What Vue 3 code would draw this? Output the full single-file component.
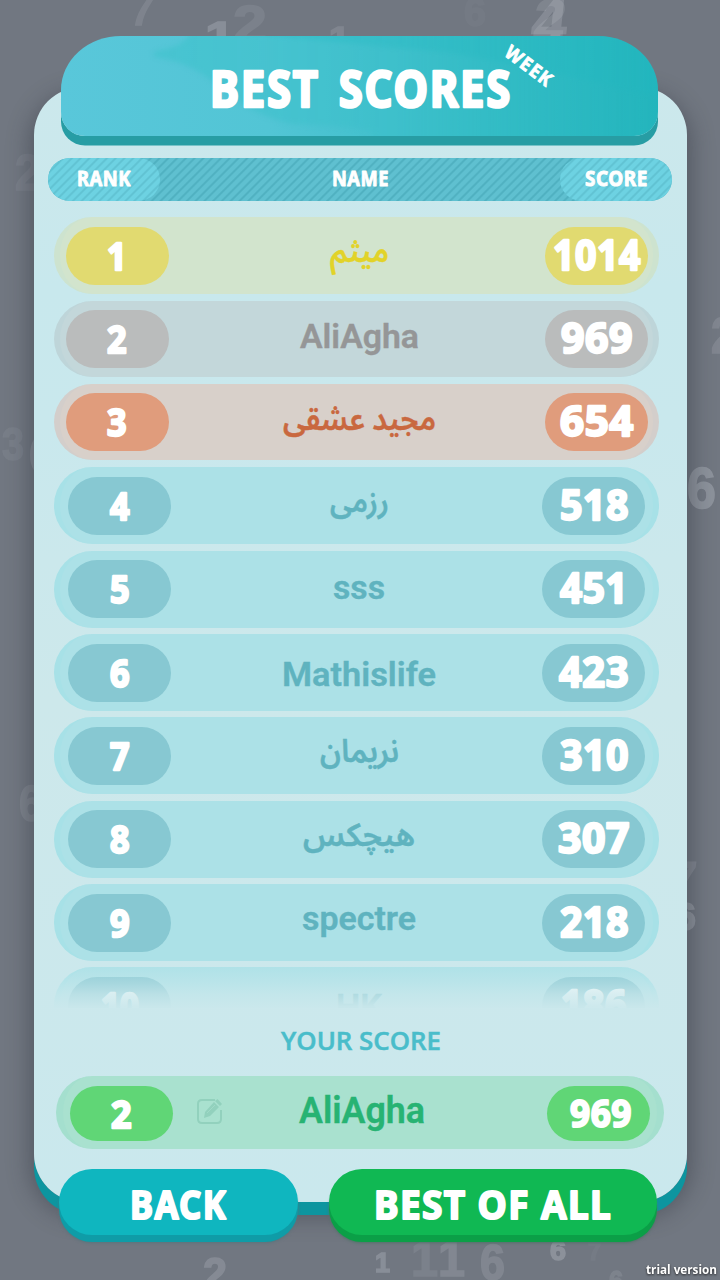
<script setup>
import { h } from 'vue'

const Label = (p) =>
  h('svg', { width: p.w, height: p.h, 'aria-label': p.t }, [
    h('text', {
      x: p.w / 2, y: p.b, 'text-anchor': 'middle', 'font-size': p.s,
      textLength: p.w, lengthAdjust: 'spacingAndGlyphs',
    }, p.t),
  ])
Label.props = ['t', 'w', 's', 'h', 'b']

const rows = [
  { rank: '1', name: 'میثم', nw: 59, b: 44.5, s: 32, score: '1014', sw: 88, kind: 'gold' },
  { rank: '2', name: 'AliAgha', nw: 119, b: 47, s: 34, score: '969', sw: 72, kind: 'silver' },
  { rank: '3', name: 'مجید عشقی', nw: 153, b: 45.5, s: 32, score: '654', sw: 74, kind: 'bronze' },
  { rank: '4', name: 'رزمی', nw: 59, b: 45, s: 32, score: '518', sw: 69, kind: 'plain' },
  { rank: '5', name: 'sss', nw: 52, b: 47.5, s: 34, score: '451', sw: 68, kind: 'plain' },
  { rank: '6', name: 'Mathislife', nw: 154, b: 51.5, s: 34, score: '423', sw: 70, kind: 'plain' },
  { rank: '7', name: 'نریمان', nw: 79, b: 45, s: 32, score: '310', sw: 69, kind: 'plain' },
  { rank: '8', name: 'هیچکس', nw: 112, b: 44.5, s: 32, score: '307', sw: 72, kind: 'plain' },
  { rank: '9', name: 'spectre', nw: 114, b: 45.5, s: 34, score: '218', sw: 69, kind: 'plain' },
  { rank: '10', name: 'HK', nw: 46, b: 51, s: 34, score: '186', sw: 66, kind: 'plain' },
]

const drift = [
  { t: '7', x: 130, y: 25, s: 48, w: 22, o: 0.13, k: -8 },
  { t: '1', x: 205, y: 51, s: 43, w: 30, o: 0.24, k: 0 },
  { t: '2', x: 233, y: 42, s: 52, w: 34, o: 0.1, k: 0 },
  { t: '1', x: 329, y: 50, s: 33, w: 21, o: 0.15, k: 0 },
  { t: '6', x: 464, y: 26, s: 40, w: 22, o: 0.03, k: 0 },
  { t: '2', x: 532, y: 37, s: 54, w: 32, o: 0.14, k: -6 },
  { t: '4', x: 530, y: 42, s: 60, w: 35, o: 0.2, k: -6 },
  { t: '2', x: 15, y: 190, s: 50, w: 25, o: 0.08, k: 0 },
  { t: '2', x: 711, y: 353, s: 50, w: 24, o: 0.15, k: 0 },
  { t: '3', x: 2, y: 460, s: 46, w: 22, o: 0.07, k: 0 },
  { t: '6', x: 29, y: 473, s: 54, w: 28, o: 0.17, k: 0 },
  { t: '6', x: 687, y: 508, s: 58, w: 29, o: 0.28, k: 0 },
  { t: '6', x: 19, y: 821, s: 50, w: 24, o: 0.12, k: 0 },
  { t: '7', x: 671, y: 894, s: 46, w: 22, o: 0.16, k: -8 },
  { t: '6', x: 674, y: 930, s: 38, w: 22, o: 0.28, k: 0 },
  { t: '2', x: 203, y: 1289, s: 44, w: 24, o: 0.2, k: 0 },
  { t: '1', x: 375, y: 1272, s: 28, w: 15, o: 0.24, k: 0 },
  { t: '1', x: 411, y: 1276, s: 50, w: 27, o: 0.1, k: 0 },
  { t: '1', x: 438, y: 1276, s: 50, w: 27, o: 0.17, k: 0 },
  { t: '6', x: 480, y: 1280, s: 50, w: 25, o: 0.16, k: 0 },
  { t: '6', x: 550, y: 1260, s: 27, w: 16, o: 0.27, k: 0 },
  { t: '7', x: 588, y: 1260, s: 26, w: 13, o: 0.04, k: 0 },
  { t: '6', x: 609, y: 1291, s: 30, w: 14, o: 0.12, k: 0 },
]
</script>

<template>
  <main class="screen">
    <svg class="drift" width="720" height="1280" aria-hidden="true">
      <text
        v-for="(d, i) in drift" :key="i" :font-size="d.s" :opacity="d.o"
        :textLength="d.w" lengthAdjust="spacingAndGlyphs"
        :transform="`translate(${d.x} ${d.y}) skewX(${d.k})`"
      >{{ d.t }}</text>
    </svg>

    <section class="panel">
      <header class="banner">
        <svg class="banner-art" width="597" height="100" aria-hidden="true">
          <defs>
            <linearGradient id="sweep" gradientUnits="userSpaceOnUse" x1="80" x2="597" y1="0" y2="0">
              <stop offset="0" stop-color="#3cc2cb" stop-opacity=".55" />
              <stop offset=".5" stop-color="#3cbfca" stop-opacity=".5" />
              <stop offset="1" stop-color="#22b6bd" stop-opacity=".2" />
            </linearGradient>
            <linearGradient id="shade" gradientUnits="userSpaceOnUse" x1="130" x2="597" y1="0" y2="0">
              <stop offset="0" stop-color="#20b7bf" stop-opacity=".3" />
              <stop offset="1" stop-color="#20b7bf" stop-opacity=".25" />
            </linearGradient>
          </defs>
          <g class="soft">
            <path d="M130 -8H640V108H290Q360 92 230 88Q190 78 160 52Q130 26 98 22Q85 18 100 14Q128 9 130 -8Z" fill="url(#sweep)" />
            <path d="M132 -8H640V72Q500 36 390 17Q260 5 132 -8Z" fill="url(#shade)" />
          </g>
        </svg>
        <Label class="display title" t="BEST SCORES" :w="302" :s="49.5" :h="100" :b="70.5" />
        <Label class="display week" t="WEEK" :w="55" :s="19" :h="20" :b="17" />
      </header>

      <div class="columns">
        <span class="tab"><Label class="display" t="RANK" :w="54" :s="20.5" :h="43" :b="28" /></span>
        <Label class="display" t="NAME" :w="57" :s="20.5" :h="43" :b="28" />
        <span class="tab tab-end"><Label class="display" t="SCORE" :w="63" :s="20.5" :h="43" :b="28" /></span>
      </div>

      <div class="list">
        <div v-for="r in rows" :key="r.rank" class="row" :class="r.kind">
          <span class="pill"><Label class="display rank" :t="r.rank" :w="r.rank.length > 1 ? 38 : 19.5" :s="37" :h="58" :b="43" /></span>
          <Label class="name" :t="r.name" :w="r.nw" :s="r.s" :h="76" :b="r.b" />
          <span class="pill"><Label class="display score" :t="r.score" :w="r.sw" :s="42" :h="58" :b="42.6" /></span>
        </div>
        <div class="fade"></div>
      </div>

      <Label class="caption" t="YOUR SCORE" :w="160" :s="25.5" :h="68" :b="42" />

      <div class="mine">
        <span class="pill"><Label class="display rank" t="2" :w="20.5" :s="38" :h="55" :b="41.5" /></span>
        <svg class="edit" width="30" height="30" viewBox="0 0 30 30" aria-hidden="true">
          <path d="M20 4H7Q3 4 3 8V23Q3 27 7 27H22Q26 27 26 23V14" fill="none" stroke="#92d1bd" stroke-width="2" />
          <path d="M9 22L10 16L19 6L24 11L15 20ZM20 5L22.500 3L27 8L25 10Z" fill="#92d1bd" />
          <path d="M12 17L20 9" stroke="#a9e1cf" stroke-width=".6" />
        </svg>
        <Label class="name" t="AliAgha" :w="126" :s="36" :h="73" :b="46.5" />
        <span class="pill"><Label class="display own" t="969" :w="62" :s="37" :h="55" :b="40.5" /></span>
      </div>
    </section>

    <nav class="actions">
      <button class="btn back"><Label class="display" t="BACK" :w="97" :s="40" :h="66" :b="50" /></button>
      <button class="btn all"><Label class="display" t="BEST OF ALL" :w="238" :s="40" :h="66" :b="50" /></button>
    </nav>
    <Label class="trial" t="trial version" :w="71" :s="12.5" :h="20" :b="14" />
  </main>
</template>

<style>
html, body { background: #717781; overflow: hidden; }
</style>

<style scoped>
.screen {
  position: relative; width: 720px; height: 1280px; overflow: hidden;
  box-sizing: border-box; padding: 87px 33px 0 34px;
  background: #717781;
}
svg { display: block; overflow: visible; flex: none; }
.drift {
  position: absolute; left: 0; top: 0; fill: #d4d8e0; stroke: #d4d8e0; stroke-width: 1.5px;
  font-family: "Liberation Sans", Arial, sans-serif; font-weight: bold;
}
.display {
  fill: #fff; stroke: #fff; stroke-width: 2px; stroke-linejoin: round;
  font-family: "Noto Sans", "Open Sans", sans-serif; font-weight: 700; letter-spacing: 1.5px;
}
.rank, .score { letter-spacing: 0; stroke-width: 2.4px; }
.score { position: relative; left: .5px; letter-spacing: .6px; }
.own { position: relative; left: 2px; letter-spacing: .6px; }
.panel {
  position: relative; width: 653px; height: 1115px; border-radius: 48px;
  background: linear-gradient(#cce8ec, #c8e8ed 18%, #c9e8ed 30%, #cde8eb 55%, #cae8ed);
  box-shadow: 0 13px 0 #0d959f, 0 10px 22px 5px rgba(45, 50, 60, .42);
  display: flex; flex-direction: column;
}
.banner {
  position: relative; width: 597px; height: 100px; margin: -51px 0 0 27px; flex: none;
  border-radius: 60px 60px 24px 24px / 54px 54px 24px 24px;
  background: linear-gradient(90deg, #59c7da, #52c5d5 35%, #38bec8 65%, #24b5bd);
  box-shadow: 0 9.5px 0 #279da4;
}
.banner-art { position: absolute; left: 0; top: 0; clip-path: inset(0 round 60px 60px 24px 24px); }
.soft { filter: blur(2.5px); }
.title { position: absolute; left: 149px; top: 0; stroke-width: 2.6px; letter-spacing: 2px; word-spacing: 7px; }
.week { position: absolute; left: 441px; top: 20px; transform: rotate(37deg); stroke-width: .8px; }
.columns {
  width: 624px; height: 43px; margin: 22px 0 0 14px; flex: none; border-radius: 22px; overflow: hidden;
  display: flex; justify-content: space-between;
  background: repeating-linear-gradient(135deg, #5fc0d0 0, #5fc0d0 3px, #50b1c1 4.2px, #50b1c1 5px, #5fc0d0 6.2px);
}
.columns .display { stroke-width: .9px; letter-spacing: .6px; }
.tab {
  width: 112px; box-sizing: border-box; border-radius: 22px; padding-left: 29px;
  background: repeating-linear-gradient(135deg, #6dd2e2 0, #6dd2e2 3px, #61c3d3 4.2px, #61c3d3 5px, #6dd2e2 6.2px);
}
.tab-end { padding-left: 25px; }
.list {
  position: relative; height: 791px; margin: 16.3px 0 0 20px; width: 605px; flex: none; overflow: hidden;
  display: flex; flex-direction: column; gap: 6.35px;
}
.row {
  width: 605px; height: 77px; box-sizing: border-box; border-radius: 38px; flex: none;
  display: grid; grid-template-columns: 103px 1fr 103px; justify-items: center;
  padding: 0 8px;
  background: #ace1e7; border-left: 6px solid #a7e1e7; border-right: 6px solid #a7e1e7;
}
.row .name { fill: #5fb3bf; stroke: #5fb3bf; margin-left: 5px; }
.pill {
  width: 103px; height: 58px; margin-top: 9.5px; border-radius: 29px;
  display: flex; justify-content: center; background: #87c8d2;
}
.gold, .silver, .bronze { height: 76.5px; margin-bottom: .5px; padding: 0 5.5px; }
.gold { background: #d2e4cd; border-color: #cde3cf; }
.gold .pill { background: #e1da70; }
.gold .name { fill: #e2d328; stroke: #e2d328; }
.silver { background: #c3d7da; border-color: #bed5d9; }
.silver .pill { background: #babcbc; }
.silver .name { fill: #959697; stroke: #959697; }
.bronze { background: #d8d0ca; border-color: #d3cecb; }
.bronze .pill { background: #e09c7c; }
.bronze .name { fill: #c9683f; stroke: #c9683f; }
.name { font-family: Roboto, "Noto Sans Arabic", "DejaVu Sans", sans-serif; font-weight: 600; stroke-width: .4px; }
.fade {
  position: absolute; left: 0; right: 0; bottom: 0; height: 46px;
  background: linear-gradient(rgba(203, 232, 236, 0), rgba(203, 232, 236, .45) 45%, rgba(203, 232, 236, .75) 70%, rgba(203, 232, 236, .96) 97%);
}
.caption { align-self: center; fill: #49bdca; font-family: "Open Sans", sans-serif; font-weight: 600; stroke: #49bdca; stroke-width: .5px; }
.mine {
  width: 608px; height: 73px; margin-left: 22px; box-sizing: border-box; border-radius: 37px; flex: none;
  display: flex; padding: 0 7px; background: #a9e1cf;
  border-left: 7px solid #a4dfce; border-right: 7px solid #a4dfce;
}
.mine .pill { height: 55px; background: #60d676; }
.edit { margin: 20px 0 0 22px; }
.mine .name { fill: #27b373; stroke: #27b373; margin: 0 122px 0 74px; }
.actions {
  position: absolute; left: 59px; top: 1169px; width: 598px; display: flex; justify-content: space-between;
}
.btn { height: 66px; padding: 0; border: 0; border-radius: 33px; display: flex; justify-content: center; }
.back { width: 239px; background: #0fb6bf; box-shadow: 0 7px 0 #0f9ca7, 0 8px 3px #59747c; }
.all { width: 328px; background: #10b853; box-shadow: 0 7px 0 #0b9f47, 0 8px 3px #4f7369; }
.trial {
  position: absolute; right: 3px; top: 1260px; fill: #fff;
  font-family: "Open Sans", sans-serif; font-weight: 700;
  filter: drop-shadow(0 1px 1px rgba(20, 20, 20, .8));
}
</style>
